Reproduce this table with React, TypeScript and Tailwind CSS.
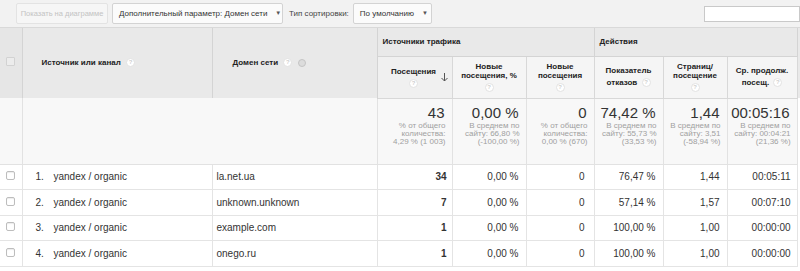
import React from "react";

const Help = () => (
  <span className="inline-block align-middle w-[9px] h-[9px] rounded-full bg-white border border-[#e2e2e2] text-[6px] leading-[7px] text-center font-bold text-[#cfcfcf]">
    ?
  </span>
);

const Checkbox = () => (
  <span className="inline-block w-[9px] h-[9px] border border-[#bdbdbd] rounded-[2px] bg-white shadow-[inset_0_1px_1px_rgba(0,0,0,0.08)]" />
);

const Caret = () => <span className="ml-[8px] text-[6px] text-[#555]">▼</span>;

const SortArrow = () => (
  <svg width="9" height="10" viewBox="0 0 9 10" className="text-[#555]">
    <path d="M4.5 2V9M1.5 6L4.5 9L7.5 6M4.5 2V1" stroke="currentColor" strokeWidth="1" fill="none" />
  </svg>
);

interface Total {
  value: string;
  lines: string[];
}

const totals: Total[] = [
  { value: "43", lines: ["% от общего", "количества:", "4,29 % (1 003)"] },
  { value: "0,00 %", lines: ["В среднем по", "сайту: 66,80 %", "(-100,00 %)"] },
  { value: "0", lines: ["% от общего", "количества:", "0,00 % (670)"] },
  { value: "74,42 %", lines: ["В среднем по", "сайту: 55,73 %", "(33,53 %)"] },
  { value: "1,44", lines: ["В среднем по", "сайту: 3,51", "(-58,94 %)"] },
  { value: "00:05:16", lines: ["В среднем по", "сайту: 00:04:21", "(21,36 %)"] },
];

const rows = [
  { source: "yandex / organic", domain: "la.net.ua", visits: "34", newPct: "0,00 %", newVisits: "0", bounce: "76,47 %", pages: "1,44", time: "00:05:11" },
  { source: "yandex / organic", domain: "unknown.unknown", visits: "7", newPct: "0,00 %", newVisits: "0", bounce: "57,14 %", pages: "1,57", time: "00:07:10" },
  { source: "yandex / organic", domain: "example.com", visits: "1", newPct: "0,00 %", newVisits: "0", bounce: "100,00 %", pages: "1,00", time: "00:00:00" },
  { source: "yandex / organic", domain: "onego.ru", visits: "1", newPct: "0,00 %", newVisits: "0", bounce: "100,00 %", pages: "1,00", time: "00:00:00" },
];

export default function App() {
  return (
    <div className="w-[800px] h-[271px] overflow-hidden bg-white font-['Liberation_Sans',Arial,sans-serif] text-[#333]">
      {/* Toolbar */}
      <div className="flex items-center h-[28px] bg-[#f2f2f2] border-b border-[#d9d9d9] pl-[16px] text-[8px] whitespace-nowrap">
        <div className="flex items-center justify-center shrink-0 h-[21px] w-[92px] border border-[#e3e3e3] bg-[#f6f6f6] text-[#c3c3c3] text-[7.5px] rounded-[2px]">
          Показать на диаграмме
        </div>
        <div className="flex items-center justify-between shrink-0 h-[21px] ml-[4px] w-[171px] pl-[6px] pr-[8px] border border-[#d3d3d3] bg-[#fbfbfb] text-[#333] rounded-[2px]">
          <span>Дополнительный параметр: Домен сети</span>
          <Caret />
        </div>
        <span className="ml-[6px] text-[#444]">Тип сортировки:</span>
        <div className="flex items-center justify-between shrink-0 h-[21px] ml-[4px] w-[79px] pl-[6px] pr-[8px] border border-[#d3d3d3] bg-[#fbfbfb] text-[#333] rounded-[2px]">
          <span>По умолчанию</span>
          <Caret />
        </div>
        <div className="ml-auto w-[96px] h-[16px] bg-white border border-[#c9c9c9]" />
      </div>

      {/* Table */}
      <table className="table-fixed border-collapse w-[800px]">
        <colgroup>
          <col className="w-[22px]" />
          <col className="w-[190px]" />
          <col className="w-[165px]" />
          <col className="w-[75px]" />
          <col className="w-[74px]" />
          <col className="w-[68px]" />
          <col className="w-[69px]" />
          <col className="w-[64px]" />
          <col className="w-[70px]" />
          <col className="w-[3px]" />
        </colgroup>
        <thead>
          <tr className="h-[28px] text-[8px] font-bold text-[#222]">
            <th rowSpan={2} className="bg-[#e6e6e6] border-r border-[#d4d4d4] align-middle text-center">
              <span className="inline-block w-[9px] h-[9px] border border-[#d2d2d2] bg-[#ececec] rounded-[1px]" />
            </th>
            <th rowSpan={2} className="bg-[#e9e9e9] border-r border-[#d4d4d4] text-left pl-[19px] align-middle">
              Источник или канал <span className="ml-[3px]"><Help /></span>
            </th>
            <th rowSpan={2} className="bg-[#e9e9e9] border-r border-[#d4d4d4] text-left pl-[20px] align-middle">
              Домен сети <span className="ml-[3px]"><Help /></span>
              <span className="inline-block align-middle ml-[6px] w-[8px] h-[8px] rounded-full border border-[#c4c4c4] bg-[#dcdcdc]" />
            </th>
            <th colSpan={3} className="bg-[#e9e9e9] border-r border-b border-[#d4d4d4] text-left pl-[5px]">
              Источники трафика
            </th>
            <th colSpan={3} className="bg-[#e9e9e9] border-r border-b border-[#d4d4d4] text-left pl-[5px]">
              Действия
            </th>
            <th rowSpan={2} className="bg-[#e9e9e9]" />
          </tr>
          <tr className="h-[42px] text-[8px] font-bold text-[#222] leading-[9px]">
            <th className="bg-[#f0f0f0] border-r border-b border-[#d8d8d8] align-middle">
              <div className="flex items-center pl-[10px] pr-[3px]">
                <div className="flex-1 flex flex-col items-center gap-[3px]">
                  <span>Посещения</span>
                  <Help />
                </div>
                <SortArrow />
              </div>
            </th>
            <th className="bg-[#f5f5f5] border-r border-b border-[#d8d8d8] align-middle">
              <div className="flex flex-col items-center gap-[3px]">
                <span>Новые<br />посещения, %</span>
                <Help />
              </div>
            </th>
            <th className="bg-[#f5f5f5] border-r border-b border-[#d8d8d8] align-middle">
              <div className="flex flex-col items-center gap-[3px]">
                <span>Новые<br />посещения</span>
                <Help />
              </div>
            </th>
            <th className="bg-[#f5f5f5] border-r border-b border-[#d8d8d8] align-middle leading-[12px]">
              Показатель<br />отказов <span className="ml-[2px]"><Help /></span>
            </th>
            <th className="bg-[#f5f5f5] border-r border-b border-[#d8d8d8] align-middle">
              <div className="flex flex-col items-center gap-[3px]">
                <span>Страниц/<br />посещение</span>
                <Help />
              </div>
            </th>
            <th className="bg-[#f5f5f5] border-r border-b border-[#d8d8d8] align-middle leading-[12px]">
              Ср. продолж.<br />посещ. <span className="ml-[2px]"><Help /></span>
            </th>
          </tr>
        </thead>
        <tbody>
          <tr className="h-[66px] bg-[#f8f8f8]">
            <td className="border-r border-b border-[#e2e2e2]" />
            <td colSpan={2} className="border-r border-b border-[#e2e2e2]" />
            {totals.map((t, i) => (
              <td key={i} className="border-r border-b border-[#e2e2e2] align-top text-right pt-[5px] pr-[6px]">
                <div className="text-[15px] leading-[17px] text-[#333] pr-[1px]">{t.value}</div>
                <div className="text-[8px] leading-[8px] text-[#a0a0a0] mt-[1px]">
                  {t.lines.map((l, j) => (
                    <div key={j}>{l}</div>
                  ))}
                </div>
              </td>
            ))}
            <td className="bg-white" />
          </tr>
          {rows.map((r, i) => (
            <tr key={i} className="h-[25.5px] text-[10px] text-[#333]">
              <td className="border-r border-b border-[#e4e4e4] text-center align-middle">
                <span className="inline-flex pt-[2px]"><Checkbox /></span>
              </td>
              <td className="border-r border-b border-[#e4e4e4] align-middle">
                <div className="flex">
                  <span className="w-[31px] pl-[13px]">{i + 1}.</span>
                  <span>{r.source}</span>
                </div>
              </td>
              <td className="border-r border-b border-[#e4e4e4] pl-[4px] align-middle">{r.domain}</td>
              <td className="border-r border-b border-[#e4e4e4] text-right pr-[5px] font-bold">{r.visits}</td>
              <td className="border-r border-b border-[#e4e4e4] text-right pr-[7px]">{r.newPct}</td>
              <td className="border-r border-b border-[#e4e4e4] text-right pr-[9px]">{r.newVisits}</td>
              <td className="border-r border-b border-[#e4e4e4] text-right pr-[7px]">{r.bounce}</td>
              <td className="border-r border-b border-[#e4e4e4] text-right pr-[7px]">{r.pages}</td>
              <td className="border-r border-b border-[#e4e4e4] text-right pr-[6px]">{r.time}</td>
              <td />
            </tr>
          ))}
        </tbody>
      </table>
    </div>
  );
}
